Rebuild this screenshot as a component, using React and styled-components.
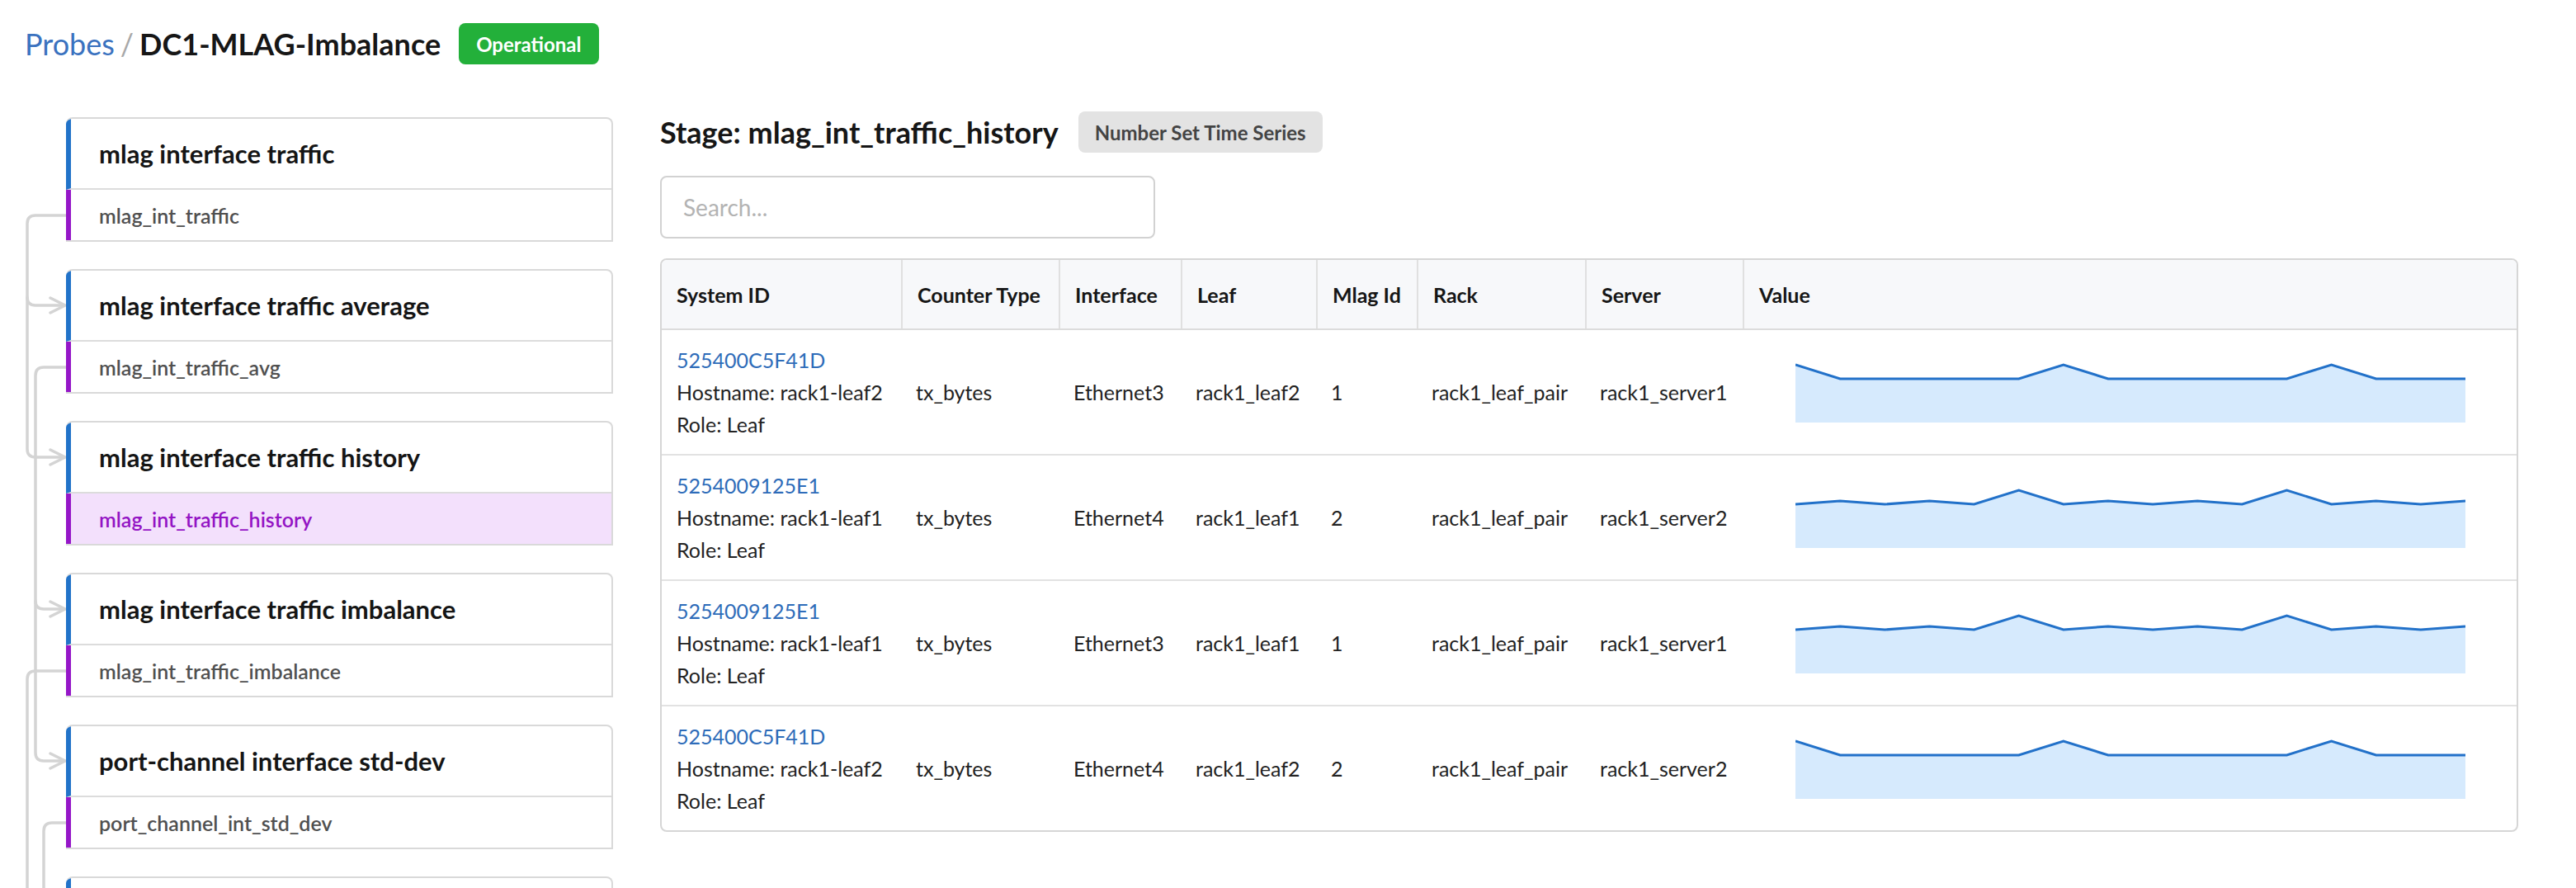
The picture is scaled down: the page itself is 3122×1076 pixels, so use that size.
import React from 'react';
import styled, { createGlobalStyle } from 'styled-components';

const stages = [
  { title: 'mlag interface traffic', output: 'mlag_int_traffic' },
  { title: 'mlag interface traffic average', output: 'mlag_int_traffic_avg' },
  { title: 'mlag interface traffic history', output: 'mlag_int_traffic_history', active: true },
  { title: 'mlag interface traffic imbalance', output: 'mlag_int_traffic_imbalance' },
  { title: 'port-channel interface std-dev', output: 'port_channel_int_std_dev' },
  // last card is only peeking in at the bottom edge
  { title: '', output: '', stub: true },
];

const columns = ['System ID', 'Counter Type', 'Interface', 'Leaf', 'Mlag Id', 'Rack', 'Server', 'Value'];

const SPIKY = [4, 21, 21, 21, 21, 21, 4, 21, 21, 21, 21, 21, 4, 21, 21, 21];
const WAVY = [21, 17, 21, 17, 21, 4, 21, 17, 21, 17, 21, 4, 21, 17, 21, 17];

const rows = [
  { id: '525400C5F41D', host: 'rack1-leaf2', iface: 'Ethernet3', leaf: 'rack1_leaf2', mlag: 1, server: 'rack1_server1', series: SPIKY },
  { id: '5254009125E1', host: 'rack1-leaf1', iface: 'Ethernet4', leaf: 'rack1_leaf1', mlag: 2, server: 'rack1_server2', series: WAVY },
  { id: '5254009125E1', host: 'rack1-leaf1', iface: 'Ethernet3', leaf: 'rack1_leaf1', mlag: 1, server: 'rack1_server1', series: WAVY },
  { id: '525400C5F41D', host: 'rack1-leaf2', iface: 'Ethernet4', leaf: 'rack1_leaf2', mlag: 2, server: 'rack1_server2', series: SPIKY },
];

// connector paths drawn in page coordinates (viewBox is offset to match)
const links = [
  'M80 261 H43 Q33 261 33 271 V360 Q33 370 43 370 H78',
  'M33 360 V544 Q33 554 43 554 H78',
  'M80 445 H53 Q43 445 43 455 V728 Q43 738 53 738 H78',
  'M43 728 V912 Q43 922 53 922 H78',
  'M80 813 H43 Q33 813 33 823 V1300',
  'M80 997 H63 Q53 997 53 1007 V1300',
];
const arrows = [370, 554, 738, 922];

function Sparkline({ series }) {
  const w = 810;
  const step = w / (series.length - 1);
  const pts = series.map((y, i) => `${(i * step).toFixed(1)},${y}`).join(' ');
  return (
    <Chart viewBox={`0 0 ${w} 74`} preserveAspectRatio="none">
      <polygon points={`0,74 ${pts} ${w},74`} fill="#d6eafd" />
      <polyline points={pts} fill="none" stroke="#2271c9" strokeWidth="3" />
    </Chart>
  );
}

export default function App() {
  return (
    <Page>
      <GlobalStyle />
      <TitleBar>
        <Crumb>
          <CrumbLink>Probes</CrumbLink>
          <Slash>/</Slash>
          <ProbeName>DC1-MLAG-Imbalance</ProbeName>
        </Crumb>
        <StatusBadge>Operational</StatusBadge>
      </TitleBar>
      <Main>
        <Pipeline>
          <Links viewBox="30 135 50 1100" width="50" height="1100">
            {links.map((d, i) => (
              <path key={i} d={d} />
            ))}
            {arrows.map((y) => (
              <path key={y} d={`M61 ${y - 9} L79 ${y} L61 ${y + 9}`} />
            ))}
          </Links>
          <Cards>
            {stages.map((s, i) => (
              <StageCard key={i}>
                <StageTitle>{s.title}</StageTitle>
                {!s.stub && <StageOutput active={s.active}>{s.output}</StageOutput>}
              </StageCard>
            ))}
          </Cards>
        </Pipeline>
        <Detail>
          <DetailHeader>
            <StageHeading>Stage: mlag_int_traffic_history</StageHeading>
            <TypeBadge>Number Set Time Series</TypeBadge>
          </DetailHeader>
          <Search placeholder="Search..." />
          <Table>
            <HeadRow>
              {columns.map((c) => (
                <HeadCell key={c}>{c}</HeadCell>
              ))}
            </HeadRow>
            {rows.map((r, i) => (
              <BodyRow key={i}>
                <Cell>
                  <SysInfo>
                    <SysLink>{r.id}</SysLink>
                    <span>Hostname: {r.host}</span>
                    <span>Role: Leaf</span>
                  </SysInfo>
                </Cell>
                <Cell>tx_bytes</Cell>
                <Cell>{r.iface}</Cell>
                <Cell>{r.leaf}</Cell>
                <Cell>{r.mlag}</Cell>
                <Cell>rack1_leaf_pair</Cell>
                <Cell>{r.server}</Cell>
                <ChartCell>
                  <Sparkline series={r.series} />
                </ChartCell>
              </BodyRow>
            ))}
          </Table>
        </Detail>
      </Main>
    </Page>
  );
}

const GlobalStyle = createGlobalStyle`
  html, body {
    margin: 0;
    padding: 0;
    overflow: hidden;
    background: #fff;
    font-family: Lato, "Open Sans", sans-serif;
    color: #1a1a1a;
  }
`;

const Page = styled.div`
  padding: 28px 70px 0 30px;
`;

const TitleBar = styled.div`
  display: flex;
  align-items: center;
  gap: 22px;
  height: 50px;
`;

const Crumb = styled.div`
  font-size: 36px;
  line-height: 50px;
  display: flex;
  gap: 7px;
`;

const CrumbLink = styled.span`
  color: #3a72bf;
`;

const Slash = styled.span`
  color: #a8a8a8;
`;

const ProbeName = styled.span`
  font-weight: 700;
  color: #161616;
`;

const StatusBadge = styled.div`
  height: 50px;
  padding: 0 21px;
  display: flex;
  align-items: center;
  background: #23b03a;
  color: #fff;
  font-size: 24px;
  font-weight: 700;
  border-radius: 8px;
`;

const Main = styled.div`
  display: flex;
  gap: 57px;
  margin-top: 57px;
`;

const Pipeline = styled.div`
  position: relative;
  width: 713px;
  flex-shrink: 0;
  padding: 7px 0 0 50px;
  box-sizing: border-box;
`;

const Links = styled.svg`
  position: absolute;
  left: 0;
  top: 0;
  fill: none;
  stroke: #d4d4d4;
  stroke-width: 3.5;
  stroke-linecap: round;
  stroke-linejoin: round;
`;

const Cards = styled.div`
  display: flex;
  flex-direction: column;
  gap: 33px;
`;

const StageCard = styled.div`
  border: 2px solid #d9d9d9;
  border-left: none;
  border-radius: 8px 8px 0 0;
  overflow: hidden;
  background: #fff;
`;

const StageTitle = styled.div`
  height: 84px;
  display: flex;
  align-items: center;
  padding-left: 34px;
  border-left: 6px solid #2273c9;
  border-bottom: 2px solid #dcdcdc;
  font-size: 31px;
  font-weight: 700;
  color: #151515;
`;

const StageOutput = styled.div`
  height: 61px;
  display: flex;
  align-items: center;
  padding-left: 34px;
  border-left: 6px solid #9516c8;
  font-size: 25px;
  font-weight: 600;
  color: ${(p) => (p.active ? '#9314c4' : '#505050')};
  background: ${(p) => (p.active ? '#f3e0fc' : '#fff')};
`;

const Detail = styled.div`
  flex: 1;
  min-width: 0;
`;

const DetailHeader = styled.div`
  display: flex;
  align-items: center;
  gap: 24px;
  height: 50px;
`;

const StageHeading = styled.h2`
  margin: 0;
  font-size: 36px;
  font-weight: 700;
  color: #161616;
`;

const TypeBadge = styled.div`
  height: 50px;
  padding: 0 20px;
  display: flex;
  align-items: center;
  background: #e3e3e3;
  color: #444;
  font-size: 24px;
  font-weight: 700;
  border-radius: 8px;
`;

const Search = styled.input`
  display: block;
  box-sizing: border-box;
  margin-top: 28px;
  width: 600px;
  height: 76px;
  padding: 0 26px;
  border: 2px solid #d2d2d2;
  border-radius: 8px;
  font-family: inherit;
  font-size: 28px;
  color: #333;
  outline: none;
  &::placeholder {
    color: #b3b3b3;
  }
`;

const Table = styled.div`
  margin-top: 24px;
  border: 2px solid #d6d6d6;
  border-radius: 8px;
  overflow: hidden;
`;

const gridCols = '290px 191px 148px 164px 122px 204px 191px 1fr';

const HeadRow = styled.div`
  display: grid;
  grid-template-columns: ${gridCols};
  background: #f7f8fa;
  border-bottom: 2px solid #dcdcdc;
`;

const HeadCell = styled.div`
  height: 83px;
  display: flex;
  align-items: center;
  padding: 0 18px;
  font-size: 25px;
  font-weight: 700;
  color: #161616;
  white-space: nowrap;
  & + & {
    border-left: 2px solid #e0e0e0;
  }
`;

const BodyRow = styled.div`
  display: grid;
  grid-template-columns: ${gridCols};
  height: 150px;
  & + & {
    border-top: 2px solid #e2e2e2;
  }
`;

const Cell = styled.div`
  display: flex;
  align-items: center;
  padding: 0 18px;
  font-size: 25px;
  color: #222;
  white-space: nowrap;
`;

const SysInfo = styled.div`
  display: flex;
  flex-direction: column;
  line-height: 39px;
`;

const SysLink = styled.a`
  color: #2e6cb9;
  cursor: pointer;
`;

const ChartCell = styled.div`
  display: flex;
  align-items: center;
  padding: 0 62px 0 64px;
`;

const Chart = styled.svg`
  width: 100%;
  height: 74px;
  display: block;
  & polyline {
    vector-effect: non-scaling-stroke;
  }
`;
